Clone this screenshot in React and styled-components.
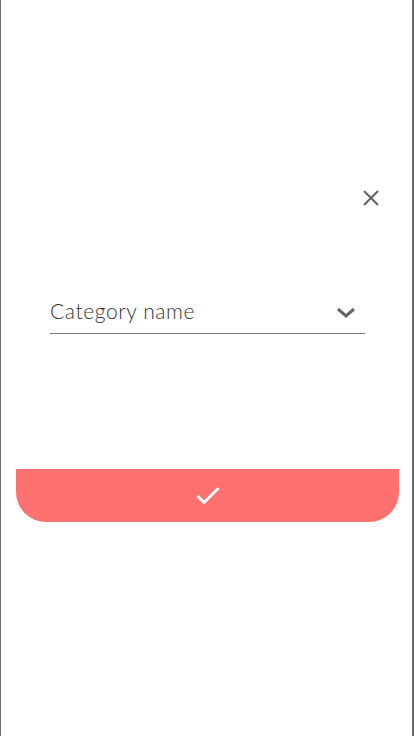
import React, { useState } from 'react';
import styled, { createGlobalStyle } from 'styled-components';

const GlobalStyle = createGlobalStyle`
  html, body {
    margin: 0;
    padding: 0;
    background: #fff;
  }
  * { box-sizing: border-box; }
`;

const Screen = styled.div`
  width: 414px;
  height: 736px;
  border-left: 1px solid #6b6b6b;
  border-right: 2px solid #6b6b6b;
  display: flex;
  flex-direction: column;
  font-family: Lato, "Noto Sans", sans-serif;
  background: #fff;
`;

const TopBar = styled.div`
  display: flex;
  justify-content: flex-end;
  padding: 189px 32px 0 0;
`;

const CloseButton = styled.button`
  border: none;
  background: none;
  padding: 0;
  width: 18px;
  height: 18px;
  display: flex;
  cursor: pointer;
`;

const Field = styled.label`
  margin: 92px 47px 0 49px;
  display: flex;
  align-items: center;
  justify-content: space-between;
  border-bottom: 1px solid #777;
  padding: 0 0 11px 0;
  height: 35px;
  cursor: pointer;
`;

const FieldText = styled.span`
  font-size: 21px;
  font-weight: 300;
  color: #333;
  letter-spacing: 0.6px;
`;

const Chevron = styled.span`
  display: flex;
  margin-right: 9px;
  padding-top: 3px;
`;

const ConfirmButton = styled.button`
  margin: 135px 13px 0 15px;
  height: 53px;
  border: none;
  background: #ff7070;
  border-radius: 0 0 30px 30px;
  display: flex;
  align-items: center;
  justify-content: center;
  cursor: pointer;
`;

const App = () => {
  const [category] = useState('Category name');
  return (
    <>
      <GlobalStyle />
      <Screen>
        <TopBar>
          <CloseButton aria-label="close">
            <svg width="18" height="18" viewBox="0 0 18 18">
              <path d="M2 2 L16 16 M16 2 L2 16" stroke="#666" strokeWidth="2.2" fill="none" />
            </svg>
          </CloseButton>
        </TopBar>
        <Field>
          <FieldText>{category}</FieldText>
          <Chevron>
            <svg width="20" height="11" viewBox="0 0 20 11">
              <path d="M2 2 L10 9 L18 2" stroke="#666" strokeWidth="3" fill="none" />
            </svg>
          </Chevron>
        </Field>
        <ConfirmButton aria-label="confirm">
          <svg width="24" height="19" viewBox="0 0 24 19">
            <path d="M1.5 10 L8 16.5 L22.5 2" stroke="#fff" strokeWidth="3" fill="none" />
          </svg>
        </ConfirmButton>
      </Screen>
    </>
  );
};

export default App;
